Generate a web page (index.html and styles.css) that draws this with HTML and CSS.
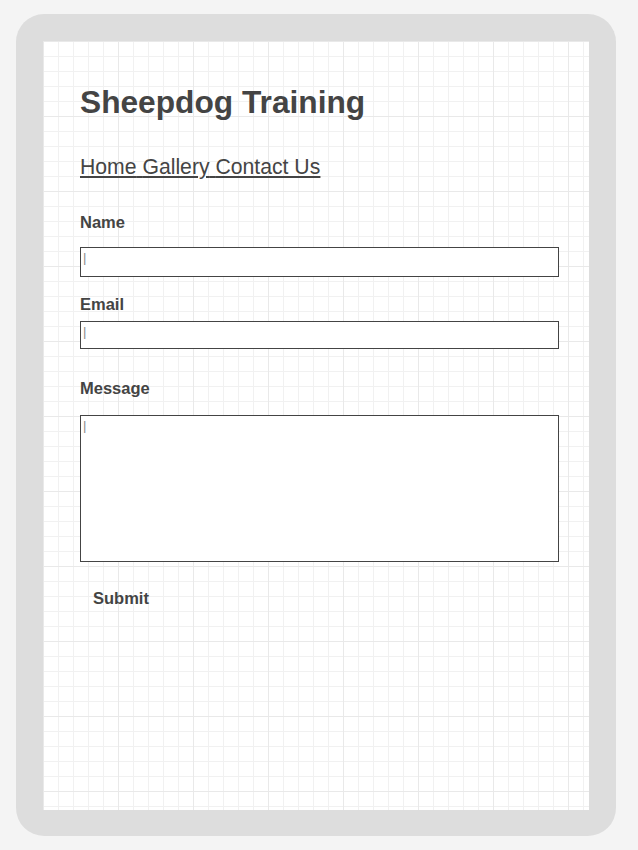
FILE: index.html
```html
<!DOCTYPE html>
<html lang="en">
<head>
<meta charset="utf-8">
<title>Sheepdog Training</title>
<link rel="stylesheet" href="styles.css">
</head>
<body>
<div class="device">
  <main class="screen">
    <h1 class="title">Sheepdog Training</h1>
    <p class="nav"><a href="#">Home</a> <a href="#">Gallery</a> <a href="#">Contact Us</a></p>
    <form class="form">
      <label class="label label-name" for="name">Name</label>
      <input class="field field-name" id="name" type="text" placeholder="|">
      <label class="label label-email" for="email">Email</label>
      <input class="field field-email" id="email" type="email" placeholder="|">
      <label class="label label-message" for="message">Message</label>
      <textarea class="field area" id="message" placeholder="|"></textarea>
      <button class="submit" type="button">Submit</button>
    </form>
  </main>
</div>
</body>
</html>
```
FILE: styles.css
```css
html, body {
  margin: 0;
  padding: 0;
}
body {
  background: #f4f4f4;
  font-family: "Liberation Sans", Arial, sans-serif;
  color: #444;
}
.device {
  box-sizing: border-box;
  width: 600px;
  height: 822px;
  margin: 14px 0 0 16px;
  padding: 27px 27px 26px 27px;
  background: #dddddd;
  border-radius: 28px;
}
.screen {
  box-sizing: border-box;
  height: 100%;
  display: flex;
  flex-direction: column;
  align-items: flex-start;
  padding: 43px 30px 0 37px;
  background-color: #fff;
  background-image:
    linear-gradient(to right, #e9e9e9 1px, transparent 1px),
    linear-gradient(to bottom, #e9e9e9 1px, transparent 1px),
    linear-gradient(to right, #f1f1f1 1px, transparent 1px),
    linear-gradient(to bottom, #f1f1f1 1px, transparent 1px);
  background-size: 75px 75px, 75px 75px, 15px 15px, 15px 15px;
}
.title {
  margin: 0;
  font-size: 31.7px;
  font-weight: bold;
  line-height: 36px;
  color: #444;
}
.nav {
  margin: 35px 0 0 0;
  font-size: 21.2px;
  line-height: 24px;
  text-decoration: underline;
  text-underline-offset: 2px;
}
.nav a {
  color: #444;
  text-decoration: underline;
}
.form {
  align-self: stretch;
  display: flex;
  flex-direction: column;
  align-items: flex-start;
  margin-top: 34px;
}
.label {
  font-size: 16.5px;
  font-weight: bold;
  line-height: 19px;
}
.field {
  box-sizing: border-box;
  align-self: stretch;
  margin: 0;
  border: 1px solid #444;
  border-radius: 0;
  background: #fff;
  font-family: "Liberation Sans", Arial, sans-serif;
  font-size: 13px;
  line-height: 15px;
  color: #444;
  padding: 2px 2px 0 2px;
  outline: none;
}
.field::placeholder {
  color: #8a8a8a;
  opacity: 1;
}
.field-name {
  margin-top: 15px;
  height: 30px;
  padding-bottom: 11px;
}
.label-email {
  margin-top: 18px;
}
.field-email {
  margin-top: 7px;
  height: 28px;
  padding-bottom: 9px;
}
.label-message {
  margin-top: 30px;
}
.area {
  margin-top: 17px;
  height: 147px;
  padding: 2px 2px;
  resize: none;
}
.submit {
  margin-top: 27px;
  padding: 0 13px;
  border: none;
  background: transparent;
  font-family: "Liberation Sans", Arial, sans-serif;
  font-size: 16.5px;
  font-weight: bold;
  line-height: 19px;
  color: #444;
}
```
